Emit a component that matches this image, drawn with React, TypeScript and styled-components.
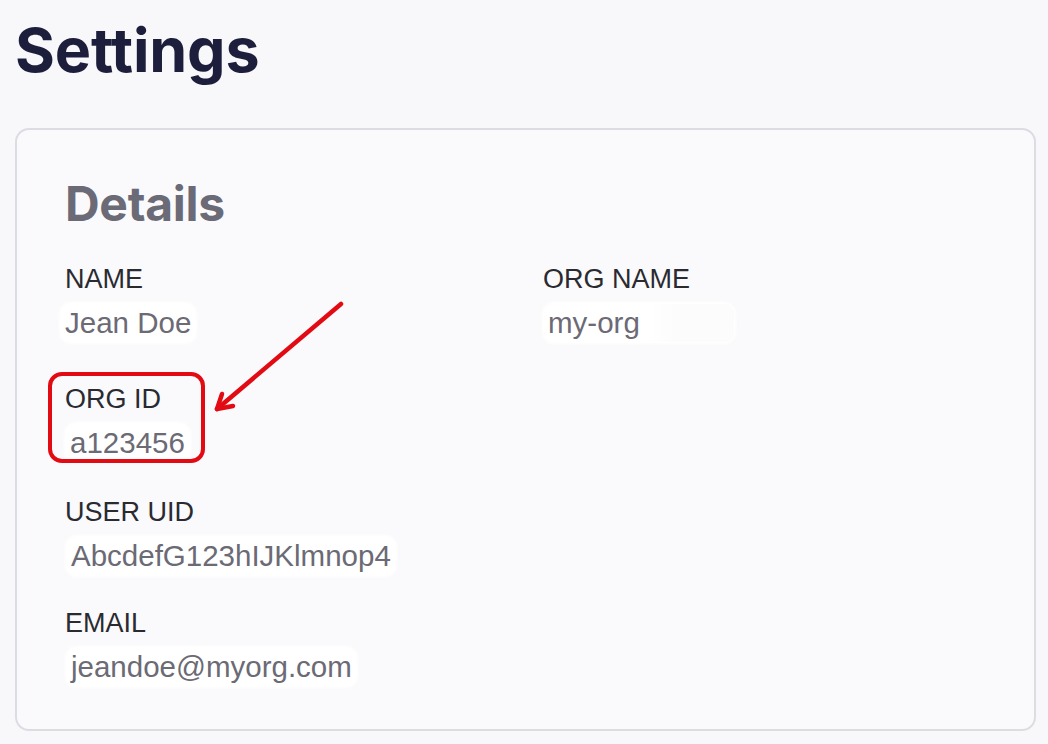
import React from "react";
import styled, { createGlobalStyle } from "styled-components";

const GlobalStyle = createGlobalStyle`
  html, body {
    margin: 0;
    padding: 0;
    background: #f8f8fb;
  }
  body {
    font-family: "Liberation Sans", Arial, sans-serif;
    -webkit-font-smoothing: antialiased;
  }
`;

const Page = styled.div`
  width: 1048px;
  height: 744px;
  padding: 20px 12px 0 15px;
  box-sizing: border-box;
  overflow: hidden;
`;

const PageTitle = styled.h1`
  margin: 0;
  font-family: Inter, "Noto Sans", sans-serif;
  font-size: 61px;
  line-height: 60px;
  font-weight: 700;
  letter-spacing: -0.2px;
  color: #1d1e3b;
`;

const Card = styled.section`
  position: relative;
  margin-top: 48px;
  width: 1021px;
  height: 603px;
  box-sizing: border-box;
  border: 2px solid #dcdce3;
  border-radius: 14px;
  background: #fafafc;
  padding: 50px 48px 0;
`;

const CardTitle = styled.h2`
  margin: 0;
  font-family: Inter, "Noto Sans", sans-serif;
  font-size: 48px;
  line-height: 48px;
  font-weight: 700;
  letter-spacing: -0.3px;
  color: #6b6a77;
`;

const FieldGrid = styled.div`
  display: grid;
  grid-template-columns: 478px 1fr;
  grid-template-rows: 120px 113px 111px auto;
  margin-top: 35px;
`;

const Field = styled.div<{ $flagged?: boolean }>`
  position: relative;
  display: flex;
  flex-direction: column;
  align-items: flex-start;
  gap: 9px;

  ${({ $flagged }) =>
    $flagged &&
    `
    &::before {
      content: "";
      position: absolute;
      left: -17px;
      top: -11px;
      width: 157px;
      height: 91px;
      box-sizing: border-box;
      border: 4px solid #e30b13;
      border-radius: 14px;
    }
  `}
`;

const Label = styled.span`
  font-size: 27px;
  line-height: 32px;
  color: #2a2a31;
`;

const Value = styled.span<{ $inset: number; $trail?: number }>`
  margin-left: ${({ $inset }) => $inset - 4}px;
  padding: 1px ${({ $trail }) => 4 + ($trail ?? 0)}px 1px 4px;
  font-size: 29.5px;
  line-height: 36px;
  color: #6b6a75;
  background: ${({ $trail }) =>
    $trail
      ? `linear-gradient(90deg, #ffffff 0, #ffffff 55%, #fcfcfd 70%, #fcfcfd 100%)`
      : "#ffffff"};
  border-radius: 10px;
  box-shadow: 0 0 3px 2px #ffffff;
`;

const Pointer = styled.svg`
  position: absolute;
  left: 190px;
  top: 165px;
  overflow: visible;
`;

const fields = [
  { label: "NAME", value: "Jean Doe", inset: 0, col: 1, row: 1 },
  { label: "ORG NAME", value: "my-org", inset: 5, col: 2, row: 1, trail: 90 },
  { label: "ORG ID", value: "a123456", inset: 5, col: 1, row: 2, flagged: true },
  { label: "USER UID", value: "AbcdefG123hIJKlmnop4", inset: 6, col: 1, row: 3 },
  { label: "EMAIL", value: "jeandoe@myorg.com", inset: 6, col: 1, row: 4 },
];

const App = () => {
  return (
    <>
      <GlobalStyle />
      <Page>
        <PageTitle>Settings</PageTitle>
        <Card>
          <CardTitle>Details</CardTitle>
          <FieldGrid>
            {fields.map(f => (
              <Field
                key={f.label}
                $flagged={f.flagged}
                style={{ gridColumn: f.col, gridRow: f.row }}
              >
                <Label>{f.label}</Label>
                <Value $inset={f.inset} $trail={f.trail}>
                  {f.value}
                </Value>
              </Field>
            ))}
          </FieldGrid>
          <Pointer width="150" height="125" viewBox="0 0 150 125">
            <g
              stroke="#e30b13"
              strokeWidth="4.5"
              strokeLinecap="round"
              strokeLinejoin="round"
              fill="none"
            >
              <path d="M134 9 L10 114" />
              <path d="M15 99 L10 114 L26 111" />
            </g>
          </Pointer>
        </Card>
      </Page>
    </>
  );
};

export default App;
